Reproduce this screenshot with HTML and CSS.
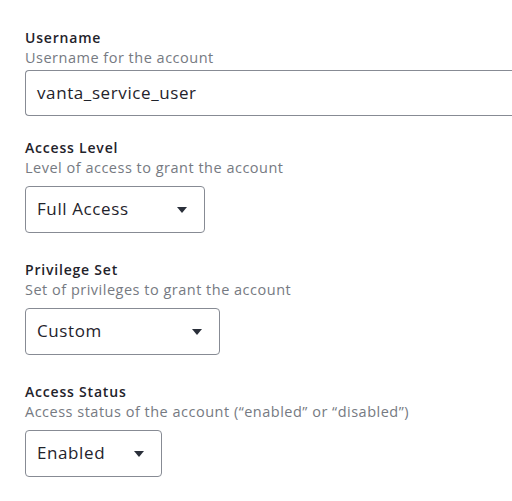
FILE: index.html
```html
<!DOCTYPE html>
<html>
<head>
<meta charset="utf-8">
<link rel="stylesheet" href="styles.css">
</head>
<body>
<div class="form">
  <div class="field field-text">
    <div class="label">Username</div>
    <div class="desc">Username for the account</div>
    <div class="input">vanta_service_user</div>
  </div>
  <div class="field">
    <div class="label">Access Level</div>
    <div class="desc">Level of access to grant the account</div>
    <div class="select sel-level"><span>Full Access</span><span class="caret"></span></div>
  </div>
  <div class="field">
    <div class="label">Privilege Set</div>
    <div class="desc">Set of privileges to grant the account</div>
    <div class="select sel-priv"><span>Custom</span><span class="caret"></span></div>
  </div>
  <div class="field">
    <div class="label">Access Status</div>
    <div class="desc">Access status of the account (“enabled” or “disabled”)</div>
    <div class="select sel-status"><span>Enabled</span><span class="caret"></span></div>
  </div>
</div>
</body>
</html>
```
FILE: styles.css
```css
html, body {
  margin: 0;
  padding: 0;
  background: #fff;
  overflow: hidden;
}
body {
  font-family: "Open Sans", "Noto Sans", sans-serif;
  color: #1f232b;
}
.form {
  display: flex;
  flex-direction: column;
  gap: 27px;
  padding: 28px 0 0 25px;
}
.field {
  display: flex;
  flex-direction: column;
}
.field-text {
  margin-bottom: -5px;
}
.label {
  font-size: 14px;
  font-weight: 600;
  line-height: 20px;
  letter-spacing: 0.8px;
  color: #1f232b;
}
.desc {
  font-size: 14.5px;
  line-height: 20px;
  letter-spacing: 0.5px;
  color: #767a82;
  margin-bottom: 8px;
}
.field-text .desc {
  margin-bottom: 2px;
}
.input, .select {
  box-sizing: border-box;
  height: 47px;
  border: 1px solid #878b94;
  border-radius: 4px;
  display: flex;
  align-items: center;
  padding: 0 11px 2px;
  font-size: 17px;
  letter-spacing: 0.6px;
  color: #1f232b;
}
.input {
  height: 46px;
  width: 500px;
  border-right: none;
  border-radius: 4px 0 0 4px;
}
.select {
  justify-content: space-between;
  padding-right: 17px;
}
.sel-level { width: 180px; }
.sel-priv { width: 195px; }
.sel-status { width: 137px; }
.caret {
  width: 0;
  height: 0;
  margin-top: 2px;
  border-left: 5px solid transparent;
  border-right: 5px solid transparent;
  border-top: 6px solid #2a2f3a;
}
```
